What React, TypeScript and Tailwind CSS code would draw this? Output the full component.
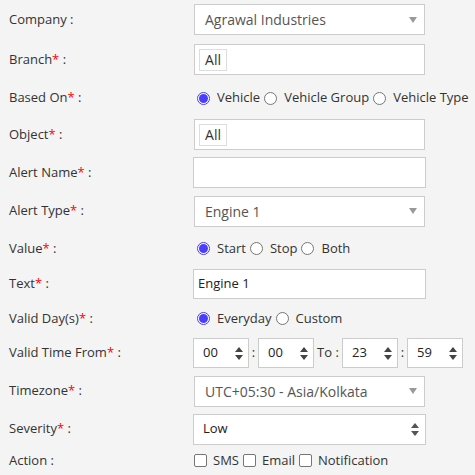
import React from "react";

function Label({ text, required }: { text: string; required?: boolean }) {
  return (
    <div className="w-[193px] shrink-0 pl-[9px] text-[13px] text-[#333]">
      {text}
      {required && <span className="text-[#ff0000]">*</span>} :
    </div>
  );
}

function Caret() {
  return (
    <svg width="8" height="6" viewBox="0 0 8 6" className="absolute right-[7px] top-1/2 -translate-y-1/2">
      <path d="M0 0 H8 L4 6 Z" fill="#999" />
    </svg>
  );
}

function UpDown({ color = "#444" }: { color?: string }) {
  return (
    <svg width="8" height="13" viewBox="0 0 8 13">
      <path d="M0 5 L4 0 L8 5 Z" fill={color} />
      <path d="M0 8 L4 13 L8 8 Z" fill={color} />
    </svg>
  );
}

function Select({ value }: { value: string }) {
  return (
    <div className="relative ml-px flex h-[31px] w-[231px] items-center border border-[#ccc] bg-white pl-[10px] text-[14px] text-[#555]">
      {value}
      <Caret />
    </div>
  );
}

function ChipBox() {
  return (
    <div className="ml-px flex h-[31px] w-[231px] items-center border border-[#ccc] bg-white pl-[4px]">
      <div className="flex h-[22px] w-[28px] items-center justify-center border border-[#ddd] text-[14px] text-[#333]">
        All
      </div>
    </div>
  );
}

function Radio({ checked }: { checked?: boolean }) {
  return checked ? (
    <span className="flex h-[13px] w-[13px] shrink-0 items-center justify-center rounded-full border border-[#4a3dff] bg-white">
      <span className="h-[9px] w-[9px] rounded-full bg-[#4a3dff]" />
    </span>
  ) : (
    <span className="h-[13px] w-[13px] shrink-0 rounded-full border border-[#767676] bg-white" />
  );
}

function RadioGroup({ options }: { options: string[] }) {
  return (
    <div className="ml-[4px] flex items-center text-[13px] text-[#333]">
      {options.map((o, i) => (
        <div key={o} className="flex items-center">
          <Radio checked={i === 0} />
          <span className="ml-[7px] mr-[4px]">{o}</span>
        </div>
      ))}
    </div>
  );
}

function TimeBox({ value }: { value: string }) {
  return (
    <div className="flex h-[30px] w-[56px] items-center justify-between border border-[#ccc] bg-white pl-[9px] pr-[5px] text-[13px] text-[#222]">
      {value}
      <UpDown />
    </div>
  );
}

function Checkbox({ label }: { label: string }) {
  return (
    <div className="flex items-center">
      <span className="h-[13px] w-[13px] rounded-[2px] border border-[#767676] bg-white" />
      <span className="ml-[6px] mr-[4px]">{label}</span>
    </div>
  );
}

export default function App() {
  const rows: { label: string; req?: boolean; h: string; field: React.ReactNode }[] = [
    { label: "Company", h: "h-[39px]", field: <Select value="Agrawal Industries" /> },
    { label: "Branch", req: true, h: "h-[41px]", field: <ChipBox /> },
    { label: "Based On", req: true, h: "h-[36px]", field: <RadioGroup options={["Vehicle", "Vehicle Group", "Vehicle Type"]} /> },
    { label: "Object", req: true, h: "h-[37px]", field: <ChipBox /> },
    {
      label: "Alert Name",
      req: true,
      h: "h-[39px]",
      field: <div className="h-[31px] w-[233px] border border-[#ccc] bg-white" />,
    },
    { label: "Alert Type", req: true, h: "h-[38px]", field: <Select value="Engine 1" /> },
    { label: "Value", req: true, h: "h-[37px]", field: <RadioGroup options={["Start", "Stop", "Both"]} /> },
    {
      label: "Text",
      req: true,
      h: "h-[33px]",
      field: (
        <div className="flex h-[30px] w-[233px] items-center border border-[#ccc] bg-white pl-[4px] text-[13px] text-[#222]">
          Engine 1
        </div>
      ),
    },
    { label: "Valid Day(s)", req: true, h: "h-[37px]", field: <RadioGroup options={["Everyday", "Custom"]} /> },
    {
      label: "Valid Time From",
      req: true,
      h: "h-[32px]",
      field: (
        <div className="flex items-center text-[13px] text-[#333]">
          <TimeBox value="00" />
          <span className="w-[9px] text-center">:</span>
          <TimeBox value="00" />
          <span className="w-[28px] text-center">To :</span>
          <TimeBox value="23" />
          <span className="w-[9px] text-center">:</span>
          <TimeBox value="59" />
        </div>
      ),
    },
    { label: "Timezone", req: true, h: "h-[44px]", field: <Select value="UTC+05:30 - Asia/Kolkata" /> },
    {
      label: "Severity",
      req: true,
      h: "h-[32px]",
      field: (
        <div className="flex h-[31px] w-[233px] items-center justify-between border border-[#ccc] bg-white pl-[9px] pr-[6px] text-[13px] text-[#222]">
          Low
          <UpDown color="#555" />
        </div>
      ),
    },
    {
      label: "Action",
      h: "h-[31px]",
      field: (
        <div className="ml-px flex items-center text-[13px] text-[#333]">
          <Checkbox label="SMS" />
          <Checkbox label="Email" />
          <Checkbox label="Notification" />
        </div>
      ),
    },
  ];

  return (
    <div
      className="h-[475px] w-[475px] overflow-hidden bg-[#f4f4f4]"
      style={{ fontFamily: '"Open Sans", sans-serif' }}
    >
      {rows.map((r) => (
        <div key={r.label} className={`flex items-center ${r.h}`}>
          <Label text={r.label} required={r.req} />
          {r.field}
        </div>
      ))}
    </div>
  );
}
